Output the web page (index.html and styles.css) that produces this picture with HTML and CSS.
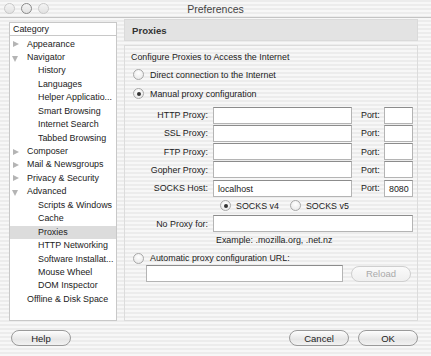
FILE: index.html
```html
<!DOCTYPE html>
<html lang="en">
<head>
<meta charset="UTF-8">
<title>Preferences</title>
<link rel="stylesheet" href="styles.css">
</head>
<body>
<div class="window">

<!-- title bar -->
<div class="titlebar">
  <div class="lights"><span></span><span class="mid"></span><span></span></div>
  <div class="title">Preferences</div>
  <div></div>
</div>

<div class="main">
  <!-- category tree -->
  <div class="sidebar">
    <div class="cat-head">Category</div>
    <ul class="tree">
      <li class="top closed">Appearance</li>
      <li class="top open">Navigator</li>
      <li class="sub">History</li>
      <li class="sub">Languages</li>
      <li class="sub">Helper Applicatio...</li>
      <li class="sub">Smart Browsing</li>
      <li class="sub">Internet Search</li>
      <li class="sub">Tabbed Browsing</li>
      <li class="top closed">Composer</li>
      <li class="top closed">Mail &amp; Newsgroups</li>
      <li class="top closed">Privacy &amp; Security</li>
      <li class="top open">Advanced</li>
      <li class="sub">Scripts &amp; Windows</li>
      <li class="sub">Cache</li>
      <li class="sub sel">Proxies</li>
      <li class="sub">HTTP Networking</li>
      <li class="sub">Software Installat...</li>
      <li class="sub">Mouse Wheel</li>
      <li class="sub">DOM Inspector</li>
      <li class="top">Offline &amp; Disk Space</li>
    </ul>
  </div>

  <!-- proxies panel -->
  <div class="panel">
    <div class="panel-head">Proxies</div>
    <div class="group">
      <div class="caption">Configure Proxies to Access the Internet</div>
      <label class="radio"><i></i>Direct connection to the Internet</label>
      <label class="radio"><i class="on"></i>Manual proxy configuration</label>

      <div class="form">
        <span class="lbl">HTTP Proxy:</span><span class="field"></span><span class="port">Port:</span><span class="field"></span>
        <span class="lbl">SSL Proxy:</span><span class="field"></span><span class="port">Port:</span><span class="field"></span>
        <span class="lbl">FTP Proxy:</span><span class="field"></span><span class="port">Port:</span><span class="field"></span>
        <span class="lbl">Gopher Proxy:</span><span class="field"></span><span class="port">Port:</span><span class="field"></span>
        <span class="lbl">SOCKS Host:</span><span class="field">localhost</span><span class="port">Port:</span><span class="field">8080</span>
        <span></span>
        <div class="socks wide">
          <label class="radio"><i class="on"></i>SOCKS v4</label>
          <label class="radio"><i></i>SOCKS v5</label>
        </div>
        <span class="lbl">No Proxy for:</span><span class="field wide"></span>
        <span></span><span class="example wide">Example: .mozilla.org, .net.nz</span>
      </div>

      <label class="radio auto"><i></i>Automatic proxy configuration URL:</label>
      <div class="url-row">
        <span class="field url"></span>
        <span class="btn disabled">Reload</span>
      </div>
    </div>
  </div>
</div>

<div class="footer">
  <span class="btn">Help</span>
  <div class="right">
    <span class="btn">Cancel</span>
    <span class="btn">OK</span>
  </div>
</div>

</div>
</body>
</html>
```

FILE: styles.css
```css
*{box-sizing:border-box;margin:0;padding:0}
body{
  width:431px;height:356px;overflow:hidden;
  font-family:"Liberation Sans",Arial,sans-serif;font-size:8.9px;color:#222;
  background:repeating-linear-gradient(#ececec 0 2px,#f7f7f7 2px 4px);
}

/* ── title bar ── */
.titlebar{
  height:18px;display:grid;grid-template-columns:1fr auto 1fr;align-items:center;
  border-bottom:1px solid #c4c4c4;
}
.lights{display:flex;gap:6px;padding-left:4px}
.lights span{width:11px;height:11px;border-radius:50%;border:1px solid #c8c8c8;background:linear-gradient(#f4f4f4,#e2e2e2)}
.lights .mid{border-color:#8a8a8a}
.title{font-size:10.5px;color:#444}

/* ── body ── */
.main{display:flex;gap:7px;padding:4px 13px 0 9px}
.sidebar{width:108px;height:299px;background:#fff;border:1px solid #c8c8c8;display:flex;flex-direction:column}
.cat-head{height:13px;line-height:12px;padding-left:3px;border-bottom:1px solid #c8c8c8}
.tree{list-style:none;padding-top:1.5px}
.tree li{height:13.45px;line-height:13.45px;position:relative;white-space:nowrap;overflow:hidden}
.tree .top{padding-left:17px}
.tree .sub{padding-left:28px}
.tree .sel{background:#dcdcdc}
.tree .closed::before,.tree .open::before{content:"";position:absolute;left:3px;top:3.5px}
.tree .closed::before{border-left:6px solid #b4b4b4;border-top:3.5px solid transparent;border-bottom:3.5px solid transparent}
.tree .open::before{top:5px;left:2px;border-top:6px solid #b4b4b4;border-left:3.5px solid transparent;border-right:3.5px solid transparent}

.panel{width:294px}
.panel-head{height:22px;line-height:21px;padding-left:7px;margin-top:-3px;background:#e3e3e3;border:1px solid #dadada;font-weight:bold;font-size:9.6px;color:#333}
.group{height:276px;margin-top:4px;border:1px solid #dcdcdc;padding:5px 0 0 8px}
.caption{height:12px;line-height:12px;margin-left:-2px}

.radio{display:flex;align-items:center;gap:6px;height:19px}
.radio i{width:11px;height:11px;border-radius:50%;border:1px solid #a8a8a8;background:radial-gradient(circle at 50% 35%,#fff,#e4e4e4);display:flex;align-items:center;justify-content:center}
.radio i.on::after{content:"";width:4px;height:4px;border-radius:50%;background:#333}
.caption+.radio{margin-top:2px}

.form{display:grid;grid-template-columns:77px 139px 22px 29px;column-gap:5px;row-gap:1.25px;margin:3.5px 0 0 -2px;align-items:center}
.lbl{text-align:right}
.port{padding-left:4px}
.field{height:17px;line-height:16px;background:#fff;border:1px solid #b4b4b4;border-top-color:#8c8c8c;padding-left:4px}
.wide{grid-column:2 / span 3}
.socks{display:flex;gap:11px;padding-left:7px;height:16px;align-items:center}
.socks .radio{gap:5px}
.example{padding-left:3px;height:15px;line-height:15px}

.radio.auto{height:14px;margin-top:2.75px}
.url-row{display:flex;gap:8px;align-items:center;padding-left:13px}
.url{width:197px}

.btn{
  display:inline-flex;align-items:center;justify-content:center;
  width:60px;height:16px;border-radius:8px;border:1px solid #9a9a9a;
  background:linear-gradient(#fdfdfd,#e6e6e6 60%,#f2f2f2);font-size:9.5px;color:#222;
}
.btn.disabled{color:#aaa;border-color:#cfcfcf;background:linear-gradient(#fafafa,#efefef)}

.footer{display:flex;justify-content:space-between;padding:9px 13px 0 11px}
.right{display:flex;gap:9px}
```
